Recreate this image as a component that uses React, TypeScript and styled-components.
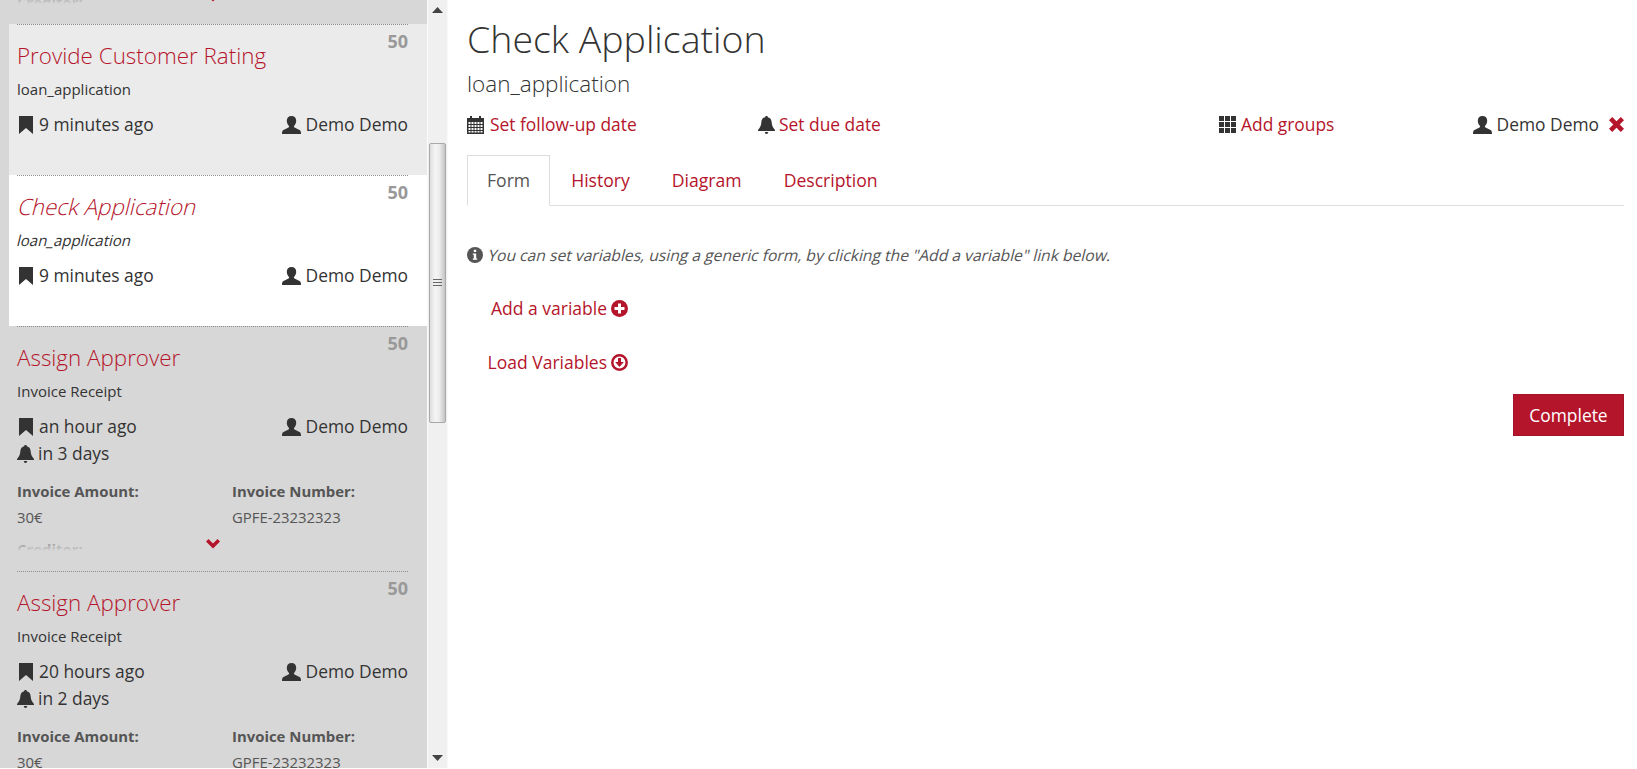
import * as React from "react";
import styled, { createGlobalStyle } from "styled-components";

const GlobalStyle = createGlobalStyle`
  html, body {
    margin: 0;
    padding: 0;
    background: #fff;
    overflow: hidden;
    font-family: "Open Sans", "Liberation Sans", sans-serif;
    color: #333;
  }
`;

const RED = "#b5152b";
const DARK = "#333";

const Page = styled.div`
  display: flex;
  width: 1637px;
  height: 769px;
  overflow: hidden;
`;

const Sidebar = styled.div`
  display: flex;
  flex: none;
  width: 448px;
  height: 768px;
  border-bottom: 1px solid #fff;
`;

const TaskList = styled.div`
  flex: none;
  width: 427px;
  height: 768px;
  overflow: hidden;
  background: #d7d7d7;
  padding-left: 9px;
  box-sizing: border-box;
`;

const ScrolledOff = styled.div`
  display: flex;
  flex-direction: column;
  justify-content: flex-end;
  height: 24px;
  overflow: hidden;
`;

const TaskItem = styled.div<{ $state?: "hover" | "selected" }>`
  flex: none;
  padding: 0 19px 0 8px;
  background: ${(p) =>
    p.$state === "selected" ? "#fff" : p.$state === "hover" ? "#ebebeb" : "transparent"};
`;

const TaskInner = styled.div<{ $tall?: boolean }>`
  position: relative;
  box-sizing: border-box;
  height: ${(p) => (p.$tall ? 245 : 151)}px;
  border-top: 1px dotted #8c8c8c;
`;

const Priority = styled.span`
  position: absolute;
  top: 3px;
  right: 0;
  font-size: 18px;
  line-height: 26px;
  font-weight: 700;
  color: #999;
`;

const TaskName = styled.div`
  padding-top: 13px;
  font-size: 22.4px;
  line-height: 36px;
  font-weight: 300;
  color: ${RED};
`;

const ProcessName = styled.div`
  margin-top: 5px;
  font-size: 15px;
  line-height: 20px;
  color: #333;
`;

/* the original slants the upright face, the installed italic has other widths */
const Slanted = styled.span`
  display: inline-block;
  margin-left: -1px;
  transform: skewX(-14deg);
  transform-origin: 0 80%;
  white-space: nowrap;
`;

const MetaRow = styled.div<{ $flush?: boolean }>`
  display: flex;
  justify-content: space-between;
  margin-top: ${(p) => (p.$flush ? 0 : 12)}px;
  height: 27px;
  font-size: 17.4px;
  line-height: 27px;
  color: #333;
`;

const MetaItem = styled.span`
  display: inline-flex;
  align-items: center;
  gap: 4px;
`;

const UserItem = styled(MetaItem)`
  gap: 5px;
`;

const Variables = styled.div`
  display: grid;
  grid-template-columns: 215px 1fr;
  align-content: start;
  position: relative;
  height: 73px;
  margin-top: 11px;
  overflow: hidden;
  font-size: 14.9px;
  line-height: 26px;
  color: #555;
`;

const VarLabel = styled.div`
  font-weight: 700;
`;

const CreditorLabel = styled(VarLabel)`
  grid-column: 1 / -1;
  padding-top: 6px;
`;

const Fade = styled.div`
  position: absolute;
  left: 0;
  right: 0;
  bottom: 0;
  height: 16px;
  background: linear-gradient(rgba(215, 215, 215, 0), #d7d7d7);
`;

const More = styled.svg`
  position: absolute;
  left: 189px;
  top: 212px;
`;

const Scrollbar = styled.div`
  display: flex;
  flex-direction: column;
  align-items: stretch;
  box-sizing: border-box;
  flex: none;
  width: 21px;
  height: 768px;
  padding: 0 1px;
  background: #f0f0f0;
  border-left: 1px solid #fafafa;
  border-right: 1px solid #fafafa;
`;

const ArrowBox = styled.div`
  display: flex;
  align-items: center;
  justify-content: center;
  flex: none;
  height: 20px;
`;

const Thumb = styled.div`
  flex: none;
  box-sizing: border-box;
  height: 280px;
  margin-top: 123px;
  margin-bottom: auto;
  border: 1px solid #a9a9a9;
  border-radius: 2px;
  background: linear-gradient(90deg, #dedede, #f4f4f4 35%, #eeeeee 60%, #c4c4c4);
  display: flex;
  align-items: center;
  justify-content: center;
`;

const Grip = styled.div`
  width: 9px;
  height: 9px;
  background: repeating-linear-gradient(#666 0 1px, transparent 1px 3px);
`;

const Main = styled.div`
  flex: 1;
  min-width: 0;
  padding: 0 13px 0 19px;
`;

const Title = styled.h1`
  margin: 14px 0 0;
  font-size: 37.5px;
  line-height: 50px;
  font-weight: 300;
  color: #333;
`;

const Subtitle = styled.h2`
  margin: 5px 0 0;
  font-size: 22.5px;
  line-height: 30px;
  font-weight: 300;
  color: #333;
`;

const Actions = styled.div`
  display: grid;
  grid-template-columns: 291px 461px 1fr auto;
  margin-top: 12px;
  height: 27px;
  font-size: 17.4px;
  line-height: 27px;
`;

const Action = styled.span`
  display: inline-flex;
  align-items: center;
  gap: 5px;
  color: ${RED};
`;

const DueAction = styled(Action)`
  gap: 4px;
`;

const Assignee = styled(Action)`
  color: ${DARK};
`;

const ClearAssignee = styled.span`
  display: inline-flex;
  margin-left: 5px;
`;

const Tabs = styled.div`
  display: flex;
  margin-top: 17px;
  height: 50px;
  border-bottom: 1px solid #ddd;
`;

const Tab = styled.div<{ $active?: boolean }>`
  box-sizing: border-box;
  height: ${(p) => (p.$active ? 51 : 50)}px;
  padding: 11px ${(p) => (p.$active ? 19 : 20)}px 0;
  font-size: 17.6px;
  line-height: 27px;
  color: ${(p) => (p.$active ? "#555" : RED)};
  border: 1px solid ${(p) => (p.$active ? "#ddd" : "transparent")};
  border-bottom-color: ${(p) => (p.$active ? "#fff" : "transparent")};
  background: ${(p) => (p.$active ? "#fff" : "transparent")};
`;

const Hint = styled.div`
  display: flex;
  align-items: center;
  gap: 5px;
  margin-top: 37px;
  font-size: 15.65px;
  line-height: 24px;
  color: #555;
`;

const VarLinks = styled.div`
  display: flex;
  flex-direction: column;
  align-items: flex-end;
  gap: 27px;
  width: 161px;
  margin-top: 28px;
`;

const VarLink = styled.span`
  display: inline-flex;
  align-items: center;
  gap: 4px;
  font-size: 17.5px;
  line-height: 27px;
  color: ${RED};
`;

const Footer = styled.div`
  display: flex;
  justify-content: flex-end;
  margin-top: 18px;
`;

const CompleteButton = styled.button`
  width: 111px;
  height: 42px;
  padding: 0;
  border: 1px solid #a5132a;
  background: ${RED};
  color: #fff;
  font-family: inherit;
  font-size: 17.4px;
`;

type IconProps = { color?: string };

const Bookmark = ({ color = DARK }: IconProps) => (
  <svg width="18" height="18" viewBox="0 0 18 18">
    <path d="M3 0h14v18l-7-6-7 6z" fill={color} transform="translate(-1 0)" />
  </svg>
);

const User = ({ color = DARK }: IconProps) => (
  <svg width="19" height="18" viewBox="0 0 19 18">
    <path
      d="M9.500 0c2.900 0 4.700 2 4.700 4.800 0 2-.8 3.800-2 4.900-.5.5-.4 1.300.3 1.700l5 2.600c1.200.6 1.500 2 1.500 4H0c0-2 .3-3.400 1.500-4l5-2.600c.7-.4.8-1.200.3-1.700-1.200-1.100-2-2.900-2-4.900C4.800 2 6.600 0 9.500 0z"
      fill={color}
    />
  </svg>
);

const Bell = ({ color = DARK }: IconProps) => (
  <svg width="17" height="18" viewBox="0 0 17 18">
    <path
      d="M8.500 0c.8 0 1.300.5 1.300 1.200 2.700.5 3.700 2.600 3.900 5.300.2 3 .9 4.700 3.300 7.500v1H0v-1c2.400-2.800 3.100-4.500 3.300-7.500.2-2.700 1.200-4.800 3.900-5.300C7.200.5 7.700 0 8.500 0zM6.800 16h3.400c0 1-.7 2-1.700 2s-1.700-1-1.700-2z"
      fill={color}
    />
  </svg>
);

const Calendar = () => (
  <svg width="18" height="18" viewBox="0 0 18 18">
    <path
      d="M3 0h2v2h7V0h2v2h3v16H0V2h3zM1.500 6v2h2V6zm3 0v2h2V6zm3 0v2h2V6zm3 0v2h2V6zm3 0v2h2V6zm-12 3v2h2V9zm3 0v2h2V9zm3 0v2h2V9zm3 0v2h2V9zm3 0v2h2V9zm-12 3v2h2v-2zm3 0v2h2v-2zm3 0v2h2v-2zm3 0v2h2v-2zm3 0v2h2v-2zm-12 3v1.500h2V15zm3 0v1.500h2V15zm3 0v1.500h2V15zm3 0v1.500h2V15zm3 0v1.500h2V15z"
      fill={DARK}
      fillRule="evenodd"
    />
  </svg>
);

const Grid = () => (
  <svg width="17" height="17" viewBox="0 0 17 17">
    <path
      d="M0 0h5v5H0zm6 0h5v5H6zm6 0h5v5h-5zM0 6h5v5H0zm6 0h5v5H6zm6 0h5v5h-5zM0 12h5v5H0zm6 0h5v5H6zm6 0h5v5h-5z"
      fill={DARK}
    />
  </svg>
);

const Remove = () => (
  <svg width="15" height="15" viewBox="0 0 15 15">
    <path
      d="M3.200 0l4.300 4.300L11.800 0 15 3.200l-4.300 4.300 4.300 4.300-3.200 3.200-4.300-4.300L3.200 15 0 11.800l4.300-4.300L0 3.200z"
      fill={RED}
    />
  </svg>
);

const PlusSign = () => (
  <svg width="17" height="17" viewBox="0 0 17 17">
    <circle cx="8.500" cy="8.500" r="8.500" fill={RED} />
    <path d="M7 3.500h3V7h3.500v3H10v3.500H7V10H3.500V7H7z" fill="#fff" />
  </svg>
);

const DownloadSign = () => (
  <svg width="17" height="17" viewBox="0 0 17 17">
    <circle cx="8.500" cy="8.500" r="7.200" fill="#fff" stroke={RED} strokeWidth="2.500" />
    <path d="M7 4h3v4h2.800l-4.300 5-4.300-5H7z" fill={RED} />
  </svg>
);

const InfoSign = () => (
  <svg width="16" height="16" viewBox="0 0 16 16">
    <circle cx="8" cy="8" r="8" fill="#555" />
    <path d="M6.800 2.800h2.400v2.200H6.800zM5.800 6.400h3.400v5h1v1.400H5.800v-1.400h1V7.800h-1z" fill="#fff" />
  </svg>
);

const Triangle = ({ down }: { down?: boolean }) => (
  <svg width="11" height="6" viewBox="0 0 11 6">
    <path d={down ? "M0 0h11L5.500 6z" : "M0 6h11L5.500 0z"} fill="#444" />
  </svg>
);

function InvoiceTask({ age, due }: { age: string; due: string }) {
  return (
    <TaskItem>
      <TaskInner $tall>
        <Priority>50</Priority>
        <TaskName>Assign Approver</TaskName>
        <ProcessName>Invoice Receipt</ProcessName>
        <MetaRow>
          <MetaItem>
            <Bookmark />
            {age}
          </MetaItem>
          <UserItem>
            <User />
            Demo Demo
          </UserItem>
        </MetaRow>
        <MetaRow $flush>
          <MetaItem>
            <Bell />
            {due}
          </MetaItem>
        </MetaRow>
        <Variables>
          <VarLabel>Invoice Amount:</VarLabel>
          <VarLabel>Invoice Number:</VarLabel>
          <div>30€</div>
          <div>GPFE-23232323</div>
          <CreditorLabel>Creditor:</CreditorLabel>
          <Fade />
        </Variables>
        <More width="14" height="10" viewBox="0 0 14 10">
          <path d="M2.500 0L7 4.500 11.500 0 14 2.500 7 9.500 0 2.500z" fill={RED} />
        </More>
      </TaskInner>
    </TaskItem>
  );
}

function LoanTask({ name, state }: { name: string; state: "hover" | "selected" }) {
  const selected = state === "selected";
  return (
    <TaskItem $state={state}>
      <TaskInner>
        <Priority>50</Priority>
        <TaskName>{selected ? <Slanted>{name}</Slanted> : name}</TaskName>
        <ProcessName>
          {selected ? <Slanted>loan_application</Slanted> : "loan_application"}
        </ProcessName>
        <MetaRow>
          <MetaItem>
            <Bookmark />9 minutes ago
          </MetaItem>
          <UserItem>
            <User />
            Demo Demo
          </UserItem>
        </MetaRow>
      </TaskInner>
    </TaskItem>
  );
}

export default function App() {
  return (
    <Page>
      <GlobalStyle />
      <Sidebar>
        <TaskList>
          <ScrolledOff>
            <InvoiceTask age="2 hours ago" due="in 3 days" />
          </ScrolledOff>
          <LoanTask name="Provide Customer Rating" state="hover" />
          <LoanTask name="Check Application" state="selected" />
          <InvoiceTask age="an hour ago" due="in 3 days" />
          <InvoiceTask age="20 hours ago" due="in 2 days" />
        </TaskList>
        <Scrollbar>
          <ArrowBox>
            <Triangle />
          </ArrowBox>
          <Thumb>
            <Grip />
          </Thumb>
          <ArrowBox>
            <Triangle down />
          </ArrowBox>
        </Scrollbar>
      </Sidebar>
      <Main>
        <Title>Check Application</Title>
        <Subtitle>loan_application</Subtitle>
        <Actions>
          <Action>
            <Calendar />
            Set follow-up date
          </Action>
          <DueAction>
            <Bell />
            Set due date
          </DueAction>
          <Action>
            <Grid />
            Add groups
          </Action>
          <Assignee>
            <User />
            Demo Demo
            <ClearAssignee>
              <Remove />
            </ClearAssignee>
          </Assignee>
        </Actions>
        <Tabs>
          <Tab $active>Form</Tab>
          <Tab>History</Tab>
          <Tab>Diagram</Tab>
          <Tab>Description</Tab>
        </Tabs>
        <Hint>
          <InfoSign />
          <Slanted>
            You can set variables, using a generic form, by clicking the "Add a variable" link below.
          </Slanted>
        </Hint>
        <VarLinks>
          <VarLink>
            Add a variable
            <PlusSign />
          </VarLink>
          <VarLink>
            Load Variables
            <DownloadSign />
          </VarLink>
        </VarLinks>
        <Footer>
          <CompleteButton>Complete</CompleteButton>
        </Footer>
      </Main>
    </Page>
  );
}
